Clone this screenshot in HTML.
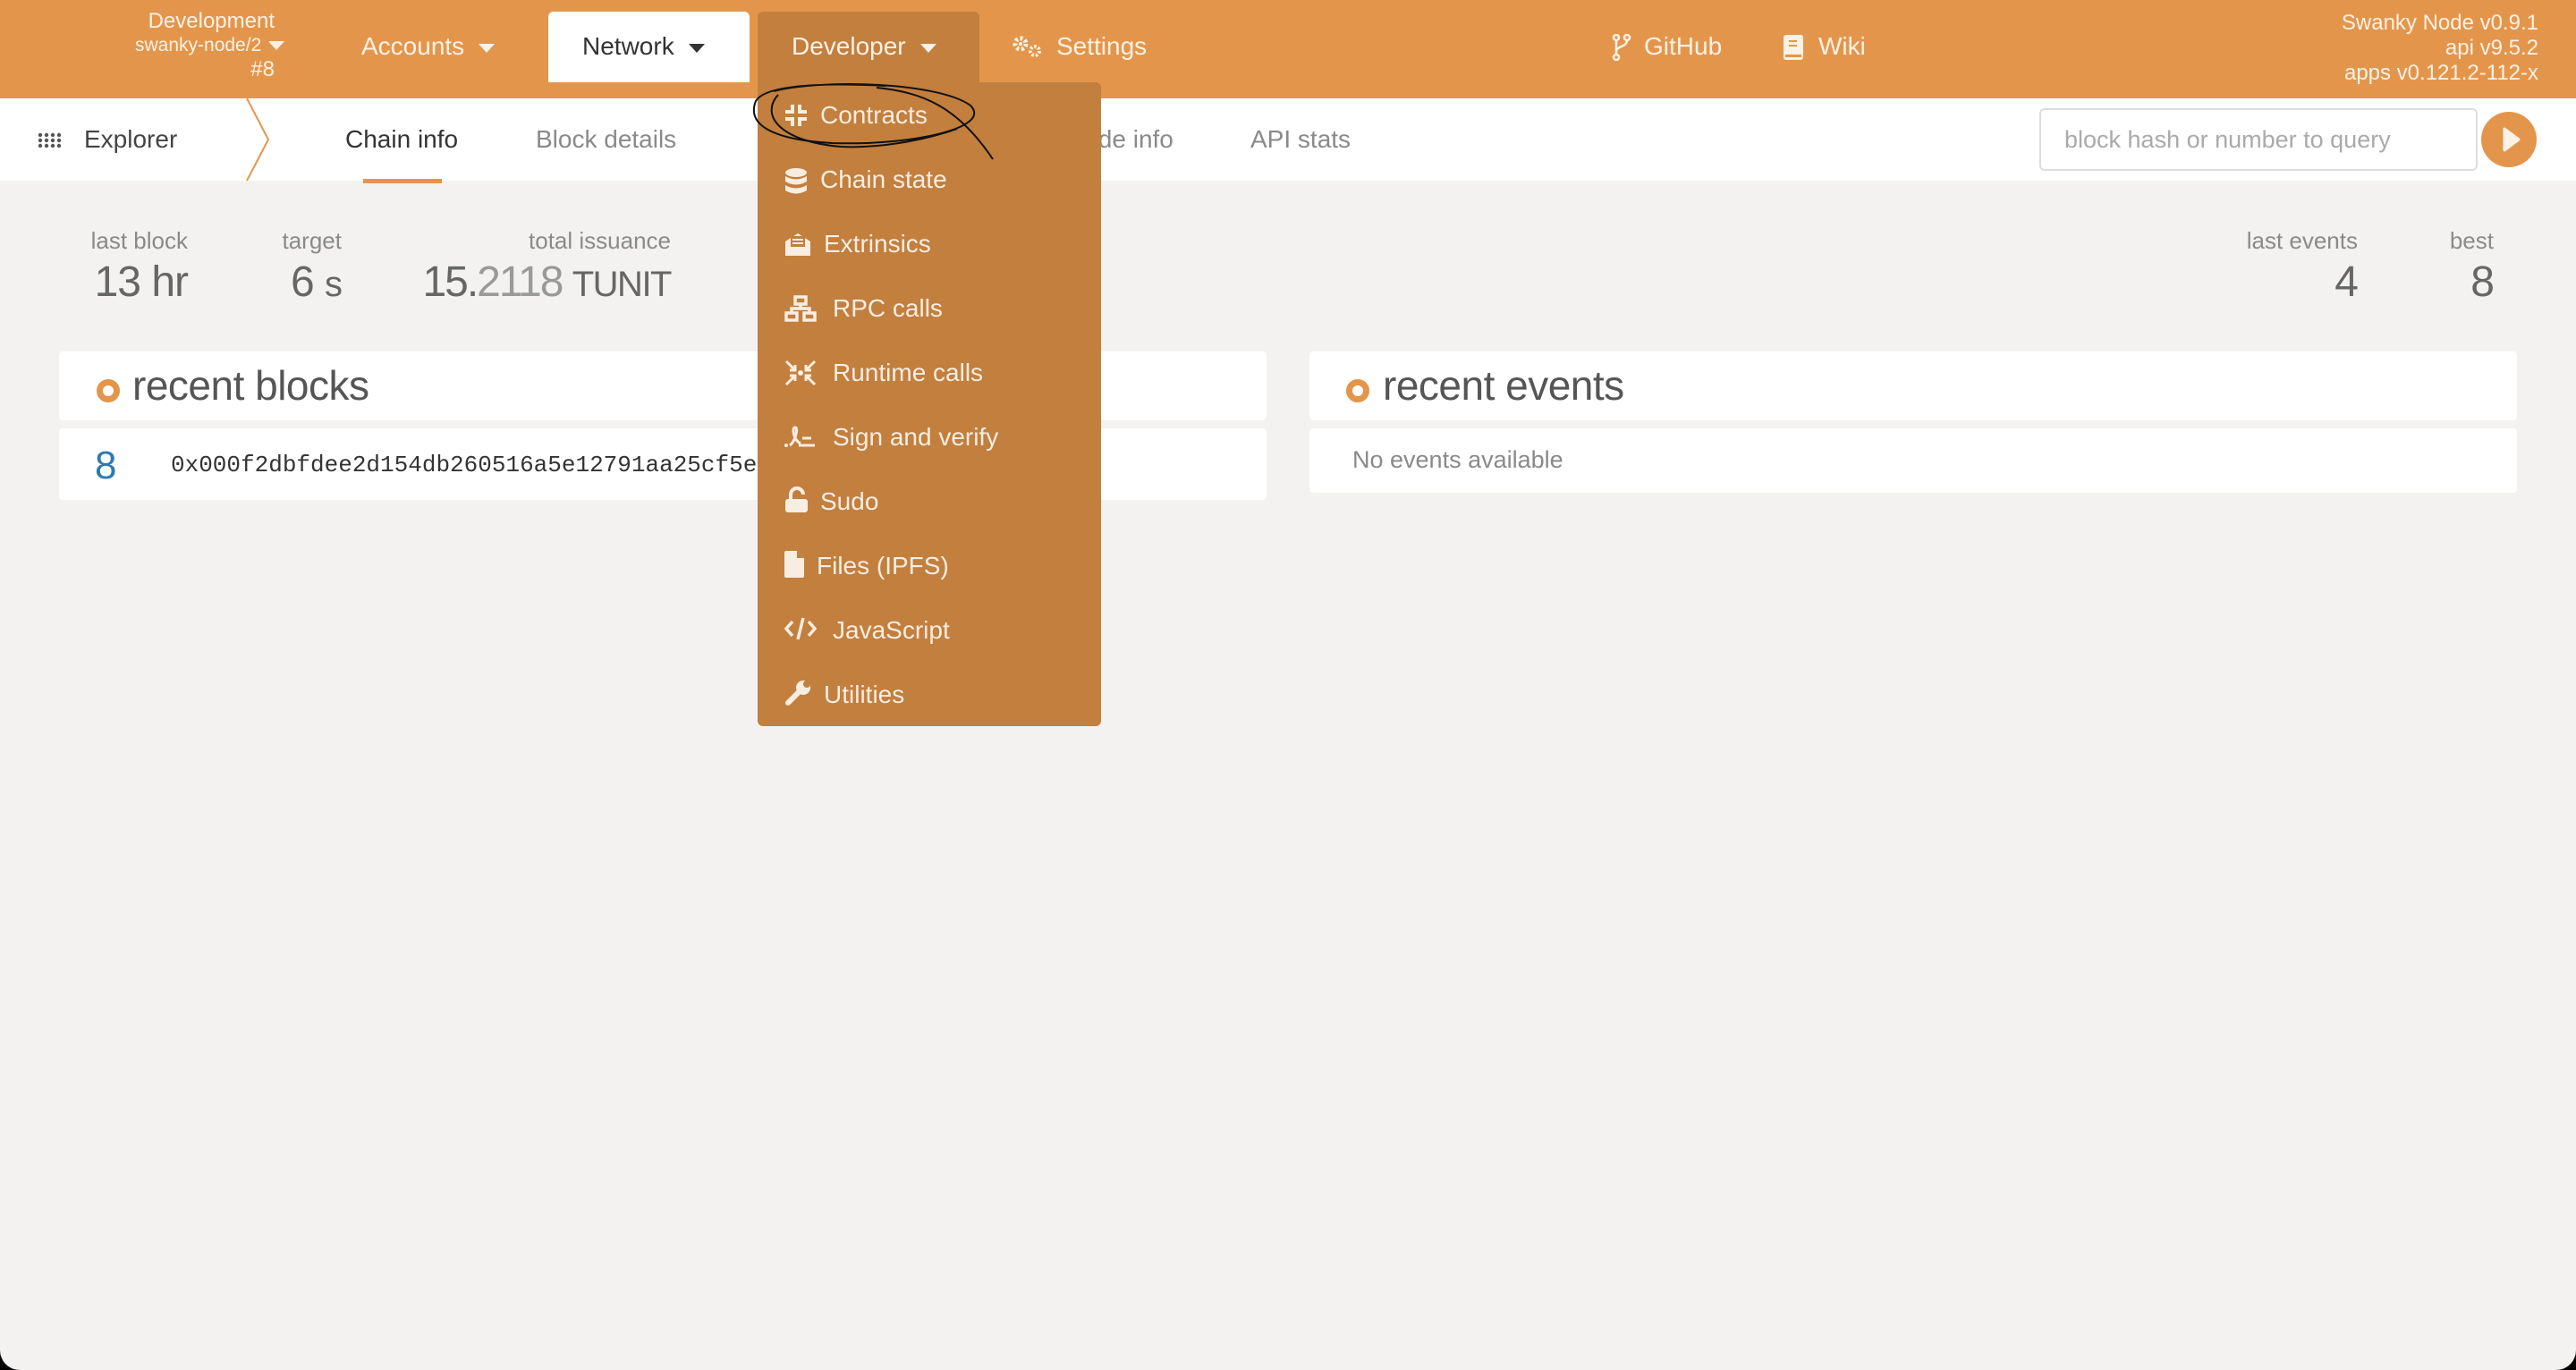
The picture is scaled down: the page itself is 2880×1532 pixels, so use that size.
<!DOCTYPE html>
<html><head><meta charset="utf-8"><style>
*{margin:0;padding:0;box-sizing:border-box}
body{width:2880px;height:1532px;background:#000;font-family:"Liberation Sans",sans-serif;overflow:hidden}
#app{position:absolute;left:0;top:0;width:2880px;height:1532px;background:#f3f2f0;border-radius:0 0 22px 22px;overflow:hidden}
.a{position:absolute;white-space:nowrap}
#hdr{position:absolute;left:0;top:0;width:2880px;height:110px;background:#e3964b}
.hw{color:#fbf1e6;font-size:28px}
.tri{display:inline-block;width:0;height:0;border-left:9px solid transparent;border-right:9px solid transparent;border-top:10px solid currentColor;vertical-align:middle;margin-left:16px}
#sub{position:absolute;left:0;top:110px;width:2880px;height:92px;background:#fff}
.sn{font-size:28px;color:#8a8a8a;top:140px}
.lbl{font-size:26px;color:#8a8a8a;top:254px;text-align:right}
.val{font-size:48px;color:#666;top:288px;text-align:right;letter-spacing:-1px}
.card{position:absolute;background:#fff;border-radius:4px}
.ct{font-size:46px;color:#555;letter-spacing:-0.5px}
.dot{position:absolute;width:26px;height:26px;border-radius:50%;border:7px solid #e3964b;background:#fff}
#dd{position:absolute;left:847px;top:92px;width:384px;height:720px;background:#c27f3e;border-radius:0 6px 6px 6px}
.mi{position:absolute;left:70px;font-size:28px;color:#f8ede1;white-space:nowrap}
.ic{position:absolute;left:30px}
</style></head><body><div id="app">
<div id="hdr">
 <div class="a" style="left:151px;top:10px;color:#fbf1e6;font-size:24px;line-height:27px;width:156px">
  <div style="text-align:right">Development</div>
  <div style="text-align:right;font-size:21px">swanky-node/2<span class="tri" style="margin-left:8px"></span></div>
  <div style="text-align:right">#8</div>
 </div>
 <div class="a hw" style="left:404px;top:36px">Accounts<span class="tri"></span></div>
 <div class="a" style="left:613px;top:13px;width:225px;height:79px;background:#fff;border-radius:6px 6px 0 0"></div>
 <div class="a" style="left:651px;top:36px;font-size:28px;color:#333">Network<span class="tri"></span></div>
 <div class="a" style="left:847px;top:13px;width:248px;height:97px;background:#c27f3e;border-radius:6px 6px 0 0"></div>
 <div class="a hw" style="left:885px;top:36px">Developer<span class="tri"></span></div>
 <svg class="a" style="left:1130px;top:38px" width="38" height="28" viewBox="0 0 38 28"><circle cx="11" cy="11" r="6" fill="none" stroke="#fbf1e6" stroke-width="5" stroke-dasharray="3 2.5"/><circle cx="11" cy="11" r="2" fill="#fbf1e6"/><circle cx="27" cy="19" r="5" fill="none" stroke="#fbf1e6" stroke-width="4" stroke-dasharray="2.5 2"/></svg>
 <div class="a hw" style="left:1181px;top:36px">Settings</div>
 <svg class="a" style="left:1802px;top:38px" width="22" height="30" viewBox="0 0 22 30"><circle cx="5" cy="4" r="3" fill="none" stroke="#fbf1e6" stroke-width="2.5"/><circle cx="17" cy="4" r="3" fill="none" stroke="#fbf1e6" stroke-width="2.5"/><circle cx="5" cy="26" r="3" fill="none" stroke="#fbf1e6" stroke-width="2.5"/><path d="M5 7V23M17 7C17 15 5 13 5 20" fill="none" stroke="#fbf1e6" stroke-width="2.5"/></svg>
 <div class="a hw" style="left:1838px;top:36px">GitHub</div>
 <svg class="a" style="left:1993px;top:38px" width="24" height="30" viewBox="0 0 24 30"><rect x="1" y="1" width="22" height="28" rx="3" fill="#fbf1e6"/><rect x="7" y="7" width="9" height="2" fill="#e3964b"/><rect x="7" y="12" width="9" height="2" fill="#e3964b"/><rect x="3" y="23" width="18" height="3" fill="#e3964b"/></svg>
 <div class="a hw" style="left:2033px;top:36px">Wiki</div>
 <div class="a" style="right:42px;top:12px;color:#fbf1e6;font-size:24px;line-height:28px;text-align:right">Swanky Node v0.9.1<br>api v9.5.2<br>apps v0.121.2-112-x</div>
</div>
<div id="sub">
 <svg class="a" style="left:42px;top:38px" width="28" height="18" viewBox="0 0 28 18"><g fill="#555"><circle cx="3" cy="3" r="2.2"/><circle cx="10" cy="3" r="2.2"/><circle cx="17" cy="3" r="2.2"/><circle cx="24" cy="3" r="2.2"/><circle cx="3" cy="9" r="2.2"/><circle cx="10" cy="9" r="2.2"/><circle cx="17" cy="9" r="2.2"/><circle cx="24" cy="9" r="2.2"/><circle cx="3" cy="15" r="2.2"/><circle cx="10" cy="15" r="2.2"/><circle cx="17" cy="15" r="2.2"/><circle cx="24" cy="15" r="2.2"/></g></svg>
 <div class="a" style="left:94px;top:30px;font-size:28px;color:#444">Explorer</div>
 <svg class="a" style="left:272px;top:0" width="30" height="92"><path d="M4 0L28 46L4 92" fill="none" stroke="#e3964b" stroke-width="2"/></svg>
</div>
<div class="a sn" style="left:386px;color:#333">Chain info</div>
<div class="a" style="left:406px;top:200px;width:88px;height:5px;background:#e3964b"></div>
<div class="a sn" style="left:599px">Block details</div>
<div class="a sn" style="left:1192px">Node info</div>
<div class="a sn" style="left:1398px">API stats</div>
<div class="a" style="left:2280px;top:121px;width:490px;height:70px;border:2px solid #ddd;border-radius:6px;background:#fff"></div>
<div class="a" style="left:2308px;top:141px;font-size:27px;color:#aaa">block hash or number to query</div>
<div class="a" style="left:2774px;top:125px;width:62px;height:62px;border-radius:50%;background:#e3964b"></div>
<svg class="a" style="left:2796px;top:141px" width="24" height="30"><path d="M4 3L20 15L4 27Z" fill="#fbf1e6" stroke="#fbf1e6" stroke-width="3" stroke-linejoin="round"/></svg>

<div class="a lbl" style="right:2670px">last block</div>
<div class="a val" style="right:2670px">13 hr</div>
<div class="a lbl" style="right:2498px">target</div>
<div class="a val" style="right:2498px">6 <span style="font-size:40px">s</span></div>
<div class="a lbl" style="right:2130px">total issuance</div>
<div class="a val" style="right:2130px;letter-spacing:-2px">15.<span style="color:#999">2118</span> <span style="font-size:40px;letter-spacing:-1.5px">TUNIT</span></div>
<div class="a lbl" style="right:244px">last events</div>
<div class="a val" style="right:244px">4</div>
<div class="a lbl" style="right:92px">best</div>
<div class="a val" style="right:92px">8</div>

<div class="card" style="left:66px;top:393px;width:1350px;height:77px"></div>
<div class="dot" style="left:108px;top:424px"></div>
<div class="a ct" style="left:148px;top:404px">recent blocks</div>
<div class="card" style="left:66px;top:479px;width:1350px;height:80px"></div>
<div class="a" style="left:106px;top:496px;font-size:44px;color:#2f7ab0">8</div>
<div class="a" style="left:191px;top:505px;font-size:26px;color:#333;font-family:'Liberation Mono',monospace">0x000f2dbfdee2d154db260516a5e12791aa25cf5ecc</div>

<div class="card" style="left:1464px;top:393px;width:1350px;height:77px"></div>
<div class="dot" style="left:1505px;top:424px"></div>
<div class="a ct" style="left:1546px;top:404px">recent events</div>
<div class="card" style="left:1464px;top:479px;width:1350px;height:72px"></div>
<div class="a" style="left:1512px;top:499px;font-size:27px;color:#8a8a8a">No events available</div>

<div id="dd">
 <svg class="ic" style="top:24px" width="26" height="26" viewBox="0 0 26 26"><g fill="none" stroke="#f8ede1" stroke-width="4"><path d="M9 1V9H1M17 1V9H25M9 25V17H1M17 25V17H25"/></g></svg>
 <div class="mi" style="top:21px;left:70px">Contracts</div>
 <svg class="ic" style="top:96px" width="26" height="30" viewBox="0 0 26 30"><g fill="#f8ede1"><ellipse cx="13" cy="5" rx="12" ry="5"/><path d="M1 9Q13 16 25 9V15Q13 22 1 15Z"/><path d="M1 19Q13 26 25 19V25Q13 32 1 25Z"/></g></svg>
 <div class="mi" style="top:93px">Chain state</div>
 <svg class="ic" style="top:166px" width="30" height="30" viewBox="0 0 30 30"><path d="M1 12L15 3L29 12V28H1Z" fill="#f8ede1"/><rect x="7" y="6" width="16" height="12" fill="#c27f3e"/><rect x="9" y="9" width="12" height="2" fill="#f8ede1"/><rect x="9" y="13" width="12" height="2" fill="#f8ede1"/></svg>
 <div class="mi" style="top:165px;left:74px">Extrinsics</div>
 <svg class="ic" style="top:238px" width="36" height="30" viewBox="0 0 36 30"><g fill="none" stroke="#f8ede1" stroke-width="3.5"><rect x="12" y="2" width="12" height="8"/><rect x="2" y="20" width="12" height="8"/><rect x="22" y="20" width="12" height="8"/><path d="M18 10V15M8 20V15H28V20"/></g></svg>
 <div class="mi" style="top:237px;left:84px">RPC calls</div>
 <svg class="ic" style="top:310px" width="36" height="30" viewBox="0 0 36 30"><g fill="none" stroke="#f8ede1" stroke-width="3"><path d="M2 2L12 12M2 28L12 18M34 2L24 12M34 28L24 18M6 12H12V6M6 18H12V24M30 12H24V6M30 18H24V24"/></g><circle cx="18" cy="15" r="3" fill="#f8ede1"/></svg>
 <div class="mi" style="top:309px;left:84px">Runtime calls</div>
 <svg class="ic" style="top:382px" width="36" height="28" viewBox="0 0 36 28"><g fill="none" stroke="#f8ede1" stroke-width="3"><path d="M6 24C12 20 16 4 12 4C8 4 10 18 18 22M20 16H30M16 24H34"/></g><circle cx="2" cy="24" r="2" fill="#f8ede1"/></svg>
 <div class="mi" style="top:381px;left:84px">Sign and verify</div>
 <svg class="ic" style="top:452px" width="26" height="30" viewBox="0 0 26 30"><path d="M7 14V9A7 7 0 0 1 21 9" fill="none" stroke="#f8ede1" stroke-width="4"/><rect x="1" y="14" width="25" height="15" rx="3" fill="#f8ede1"/></svg>
 <div class="mi" style="top:453px">Sudo</div>
 <svg class="ic" style="top:524px" width="22" height="30" viewBox="0 0 22 30"><path d="M2 0H14L22 8V28Q22 30 20 30H2Q0 30 0 28V2Q0 0 2 0Z" fill="#f8ede1"/><path d="M14 0V8H22" fill="#c27f3e"/></svg>
 <div class="mi" style="top:525px;left:66px">Files (IPFS)</div>
 <svg class="ic" style="top:598px" width="36" height="26" viewBox="0 0 36 26"><g fill="none" stroke="#f8ede1" stroke-width="3.5"><path d="M9 5L2 13L9 21M27 5L34 13L27 21M21 1L15 25"/></g></svg>
 <div class="mi" style="top:597px;left:84px">JavaScript</div>
 <svg class="ic" style="top:668px" width="30" height="30" viewBox="0 0 30 30"><path d="M4 26L16 14" stroke="#f8ede1" stroke-width="6" stroke-linecap="round"/><circle cx="21" cy="9" r="8" fill="#f8ede1"/><circle cx="25" cy="5" r="4" fill="#c27f3e"/></svg>
 <div class="mi" style="top:669px;left:74px">Utilities</div>
</div>
<svg class="a" style="left:830px;top:88px" width="290" height="110" viewBox="0 0 290 110"><g fill="none" stroke="#111" stroke-width="2"><path d="M35 14C90 0 220 4 255 30C280 55 190 75 100 72C30 68 5 50 15 25C25 8 80 4 160 8"/><path d="M40 18C20 40 40 70 110 76C150 78 200 70 240 56"/><path d="M150 10C200 15 240 30 280 90"/></g></svg>
</div></body></html>
